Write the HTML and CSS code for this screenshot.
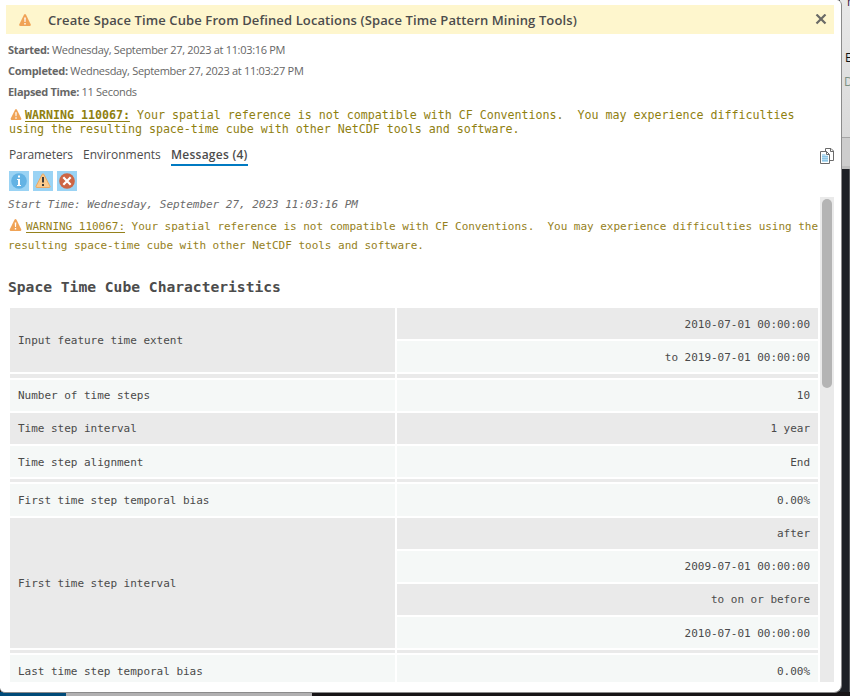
FILE: index.html
```html
<!DOCTYPE html>
<html lang="en">
<head>
<meta charset="utf-8">
<title>Geoprocessing Messages</title>
<link rel="stylesheet" href="styles.css">
</head>
<body>
<svg width="0" height="0" class="defs" aria-hidden="true">
  <symbol id="warn" viewBox="0 0 12 12">
    <path d="M5 .7Q6-.6 7 .7L11.8 10.4Q12 12 10.7 12H1.3Q0 12 .2 10.4Z" fill="#f0a356"/>
    <path d="M5.2 3.5h1.6L6.5 8h-1zM5.3 9h1.4v1.5H5.3z" fill="#fff"/>
  </symbol>
</svg>
<div class="desktop">
  <div class="side">
    <div class="side-top"><span class="frag f1">h</span><span class="frag f2">E</span><span class="frag f3">D</span></div>
    <div class="side-bar"></div>
    <div class="side-map"></div>
  </div>
  <div class="taskbar"><i class="blue"></i><i class="grey"></i><i class="dark"></i></div>
</div>
<main class="panel">
  <header class="title">
    <svg class="title-icon"><use href="#warn"/></svg>
    <h1>Create Space Time Cube From Defined Locations (Space Time Pattern Mining Tools)</h1>
    <svg class="close" viewBox="0 0 12 12"><path d="M1.500 .5l9 9M10.500 .5l-9 9" fill="none" stroke="#6a6a66" stroke-width="2.200"/></svg>
  </header>
  <section class="meta">
    <div><b>Started:</b> <span>Wednesday, September 27, 2023 at 11:03:16 PM</span></div>
    <div><b>Completed:</b> <span>Wednesday, September 27, 2023 at 11:03:27 PM</span></div>
    <div><b>Elapsed Time:</b> <span>11 Seconds</span></div>
  </section>
  <p class="summary"><svg class="wi"><use href="#warn"/></svg><b>WARNING 110067:</b> Your spatial reference is not compatible with CF Conventions.&nbsp; You may experience difficulties<br>using the resulting space-time cube with other NetCDF tools and software.</p>
  <nav class="tabs">
    <span class="t1">Parameters</span><span class="t2">Environments</span><span class="t3 active">Messages (4)</span>
    <svg class="copy" viewBox="0 0 14 16">
      <path d="M5.500 3.500V.5H11L13.500 3v9.500H9.500" fill="#fff" stroke="#6b6b6b"/>
      <path d="M10.500.5V3.500H13.500" fill="none" stroke="#6b6b6b"/>
      <path d="M.5 3.500H6.500L9.500 6.500V15.500H.5z" fill="#fff" stroke="#6b6b6b"/>
      <path d="M6.500 3.500V6.500H9.500" fill="none" stroke="#6b6b6b"/>
      <path d="M2 6h3.500v1.500H8V14H2z" fill="#b4dcf2"/>
      <path d="M2 8.500h6M2 10.500h6M2 12.500h6" stroke="#7dbbe0" stroke-width=".7"/>
    </svg>
  </nav>
  <div class="filters">
    <svg viewBox="0 0 20 20"><circle cx="10" cy="10" r="7.800" fill="#63b3e4"/><path d="M9 4.500h2v2H9zM8 8h3v6h1v1H8v-1h1V9H8z" fill="#fff"/></svg>
    <svg viewBox="0 0 20 20"><path d="M9.200 3.300q.8-1 1.600 0l6.200 12q.3 1.200-.8 1.200H3.800q-1.100 0-.8-1.200z" fill="#fbca8b" stroke="#e9a964"/><path d="M9 6h2v5.500H9zM9 13h2v2H9z" fill="#3c3c3c"/></svg>
    <svg viewBox="0 0 20 20"><circle cx="10" cy="10" r="7.800" fill="#cd6544"/><path d="M6.300 6.300l7.400 7.400M13.700 6.300l-7.400 7.400" stroke="#fff" stroke-width="2.200"/></svg>
  </div>
  <div class="scroller">
    <div class="log">
      <p class="start">Start Time: Wednesday, September 27, 2023 11:03:16 PM</p>
      <p class="warning"><svg class="wi"><use href="#warn"/></svg><u>WARNING 110067:</u> Your spatial reference is not compatible with CF Conventions.&nbsp; You may experience difficulties using the<br>resulting space-time cube with other NetCDF tools and software.</p>
      <h2>Space Time Cube Characteristics</h2>
      <div class="grid">
        <div class="label span2 g">Input feature time extent</div><div class="val low g">2010-07-01 00:00:00</div>
        <div class="val low">to 2019-07-01 00:00:00</div>
        <div class="g"></div><div class="g"></div>
        <div class="label">Number of time steps</div><div class="val">10</div>
        <div class="label g">Time step interval</div><div class="val g">1 year</div>
        <div class="label low">Time step alignment</div><div class="val low">End</div>
        <div class="g"></div><div class="g"></div>
        <div class="label">First time step temporal bias</div><div class="val">0.00%</div>
        <div class="label span4 g">First time step interval</div><div class="val g">after</div>
        <div class="val">2009-07-01 00:00:00</div>
        <div class="val g">to on or before</div>
        <div class="val low">2010-07-01 00:00:00</div>
        <div class="g"></div><div class="g"></div>
        <div class="label low">Last time step temporal bias</div><div class="val low">0.00%</div>
      </div>
    </div>
    <div class="track"><div class="thumb"></div></div>
  </div>
</main>
</body>
</html>
```
FILE: styles.css
```css
* { box-sizing: border-box; }
html, body { margin: 0; width: 850px; height: 696px; overflow: hidden; }
body { position: relative; font-family: "Open Sans", sans-serif; color: #4c4c4c; }
p, h1, h2 { margin: 0; white-space: nowrap; }
svg { flex: none; }
.defs { position: absolute; }

.desktop { position: absolute; inset: 0; background: #1b1c20; }
.side { margin-left: 840px; width: 10px; height: 692px; display: flex; flex-direction: column; }
.side-top { position: relative; overflow: hidden; height: 137px; background: linear-gradient(#e8e8e8, #d9d9d9); }
.side-bar { height: 32px; background: #cdcdcd; border-top: 1px solid #a5a5a5; border-bottom: 3px solid #bdbdbd; }
.side-map { flex: 1; background: #1d2025; border-right: 1px solid #55575a; }
.frag { position: absolute; font-size: 12px; line-height: 14px; }
.f1 { left: 7px; top: -5px; color: #402040; }
.f2 { left: 5px; top: 51px; color: #111; }
.f3 { left: 4px; top: 75px; color: #7d9084; }
.taskbar { display: flex; height: 4px; }
.blue { width: 66px; background: #004a78; }
.grey { width: 246px; background: #b1b0b1; border: solid #8f8f8f; border-width: 1px 0 0; }
.dark { flex: 1; background: #171416; }

.panel { position: relative; width: 842px; height: 693px; background: #fff; border: solid #8b8b8b; border-width: 0 1px 1px 0; border-radius: 0 5px 8px 5px; overflow: hidden; display: flex; flex-direction: column; }
.title { margin: 5px 7px 0 6px; height: 29px; flex: none; background: #fef6cd; display: flex; align-items: center; padding: 0 7px 0 13px; }
.title-icon { width: 12px; height: 12px; }
.title h1 { margin-left: 17px; flex: 1; font-size: 13px; letter-spacing: .115px; font-weight: 600; line-height: 20px; }
.close { width: 12px; height: 12px; }

.meta { padding: 5px 0 0 8px; height: 69px; flex: none; font-size: 11px; letter-spacing: -.31px; line-height: 21px; color: #666; white-space: nowrap; }
.meta b { font-weight: 700; }

.summary, .log { font-family: "DejaVu Sans Mono", monospace; letter-spacing: -.002em; }
.summary { padding: 5px 0 0 9px; height: 38px; flex: none; font-size: 11.667px; line-height: 14px; color: #8f8010; }
.summary b { text-decoration: underline; text-underline-offset: 2px; }
.wi { width: 12px; height: 11px; margin: 0 3px -1px 1px; }
.warning .wi { width: 13px; height: 12px; margin: 0 4px -1px 1px; }

.tabs { height: 28px; flex: none; display: flex; padding: 4px 7px 0 9px; font-size: 12px; line-height: 20px; }
.tabs span { height: 21px; white-space: nowrap; }
.t1 { width: 64px; margin-right: 10px; letter-spacing: -.1px; }
.t2 { width: 78px; margin-right: 10px; }
.t3 { width: 77px; letter-spacing: .25px; }
.active { font-weight: 600; border-bottom: 2px solid #007ac2; }
.copy { width: 14px; height: 16px; margin: 3px 0 0 auto; }

.filters { height: 28px; flex: none; display: flex; gap: 4px; padding: 2px 0 0 9px; }
.filters svg { width: 20px; height: 20px; background: #9ad3f4; }

.scroller { display: flex; height: 485px; flex: none; }
.log { width: 820px; overflow: hidden; padding-left: 8px; font-size: 11px; }
.start { height: 20px; line-height: 16px; font-style: italic; color: #6b6b6b; }
.warning { height: 53px; line-height: 19px; color: #95811c; }
.warning u { text-underline-offset: 2px; }
h2 { height: 38px; line-height: 34px; font-size: 14.667px; font-weight: 700; }
.grid { margin-left: 2px; width: 808px; display: grid; grid-template-columns: 385px 421px; grid-template-rows: 31px 31px 4px 31px 31px 31px 3px 32px 31px 31px 31px 31px 3px 31px; gap: 2px; color: #4a4a4a; }
.grid > div { background: #f5f8f7; }
.grid > .g { background: #eaeaea; }
.label, .val { display: flex; align-items: center; padding: 0 8px; }
.val { justify-content: flex-end; }
.grid > .low { padding-top: 2px; }
.span2 { grid-row: span 2; }
.span4 { grid-row: span 4; }
.track { width: 14px; background: #eaeaea; padding: 2px; }
.thumb { height: 189px; border-radius: 5px; background: #b4b4b4; }
```
